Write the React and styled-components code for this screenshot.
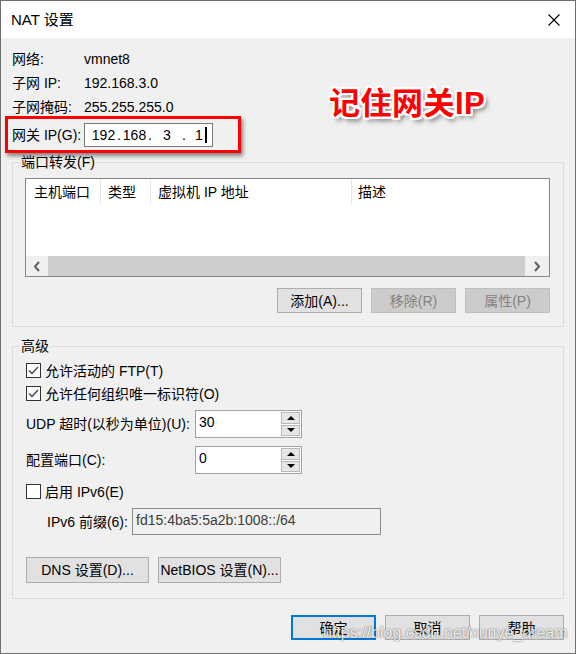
import React from "react";
import styled, { createGlobalStyle } from "styled-components";

const GlobalStyle = createGlobalStyle`
  html, body { margin: 0; padding: 0; background: #f0f0f0; }
  body {
    font-family: "Liberation Sans", "Noto Sans CJK SC", sans-serif;
    font-size: 14px;
    color: #000;
  }
  * { box-sizing: border-box; }
`;

const Window = styled.div`
  position: relative;
  width: 576px;
  height: 654px;
  border: 1px solid #6e6e6e;
  background: #f0f0f0;
  display: flex;
  flex-direction: column;
`;

const TitleBar = styled.div`
  height: 37px;
  flex: none;
  background: #fff;
  display: flex;
  align-items: center;
  padding: 0 15px 0 10px;
  font-size: 15px;
  line-height: 20px;
`;

const TitleText = styled.span`
  flex: 1;
`;

const Body = styled.div`
  display: flex;
  flex-direction: column;
  padding: 9px 11px 0 11px;
`;

const InfoGrid = styled.div`
  display: grid;
  grid-template-columns: 72px 1fr;
  grid-auto-rows: 24px;
  align-items: center;
  line-height: 18px;
`;

const GatewayBox = styled.div`
  display: flex;
  align-items: center;
  width: 236px;
  height: 37px;
  margin: -3px 0 0 -7px;
  padding-left: 4px;
  border: 3px solid #ff0000;
  box-shadow: 2px 3px 4px rgba(0, 0, 0, 0.45);
  position: relative;
`;

const FieldLabel = styled.span`
  width: ${(p) => p.$w || 72}px;
  flex: none;
  line-height: 18px;
  white-space: nowrap;
`;

const IpInput = styled.div`
  width: 129px;
  height: 24px;
  background: #fff;
  border: 1px solid #7a7a7a;
  display: flex;
  align-items: center;
  padding-left: 5px;
  line-height: 18px;
`;

const Octet = styled.span`
  width: ${(p) => p.$w || 26}px;
  display: flex;
  align-items: center;
  justify-content: ${(p) => (p.$left ? "flex-start" : "center")};
  padding-left: ${(p) => (p.$left ? "9px" : "0")};
`;

const Dot = styled.span`
  width: 4px;
  text-align: center;
`;

const Caret = styled.span`
  display: inline-block;
  width: 2px;
  height: 16px;
  background: #000;
  margin-left: 2px;
`;

const Annotation = styled.div`
  position: absolute;
  left: 328px;
  top: 85px;
  font-family: "Liberation Sans", "Noto Sans CJK SC", sans-serif;
  font-size: 31px;
  font-weight: bold;
  line-height: 36px;
  color: #ff0000;
  letter-spacing: 0.5px;
  text-shadow:
    -2px -2px 0 #fff, 2px -2px 0 #fff, -2px 2px 0 #fff, 2px 2px 0 #fff,
    0 -2px 0 #fff, 0 2px 0 #fff, -2px 0 0 #fff, 2px 0 0 #fff,
    3px 4px 5px rgba(0, 0, 0, 0.55);
`;

const Group = styled.fieldset`
  margin: ${(p) => p.$mt || 0}px 0 0 0;
  padding: 0;
  border: 1px solid #dcdcdc;
  min-width: 0;
`;

const Legend = styled.legend`
  margin-left: 7px;
  padding: 0 1px;
  line-height: 18px;
`;

const GroupInner = styled.div`
  display: flex;
  flex-direction: column;
  padding: ${(p) => p.$pad};
`;

const ListView = styled.div`
  height: 99px;
  border: 1px solid #828790;
  background: #fff;
  display: flex;
  flex-direction: column;
`;

const ListHeader = styled.div`
  height: 26px;
  display: flex;
  align-items: flex-start;
  padding-top: 1px;
`;

const HeaderCell = styled.div`
  width: ${(p) => (p.$w ? `${p.$w}px` : "auto")};
  flex: ${(p) => (p.$w ? "none" : "1")};
  height: 24px;
  line-height: 24px;
  padding-left: ${(p) => p.$pl || 7}px;
  border-right: ${(p) => (p.$w ? "1px solid #e5e5e5" : "none")};
  white-space: nowrap;
`;

const ListBody = styled.div`
  flex: 1;
`;

const HScroll = styled.div`
  height: 20px;
  display: grid;
  grid-template-columns: 22px 1fr 24px;
  background: #f0f0f0;
`;

const ScrollArrow = styled.div`
  display: flex;
  align-items: center;
  justify-content: center;
`;

const ScrollThumb = styled.div`
  background: #cdcdcd;
`;

const ButtonRow = styled.div`
  display: flex;
  justify-content: ${(p) => (p.$start ? "flex-start" : "flex-end")};
  gap: 9px;
  margin-top: ${(p) => p.$mt || 0}px;
`;

const Button = styled.button`
  width: ${(p) => p.$w || 85}px;
  height: ${(p) => p.$h || 25}px;
  margin: 0;
  padding: 0;
  font: inherit;
  font-size: 14px;
  line-height: 18px;
  color: ${(p) => (p.disabled ? "#838383" : "#000")};
  background: ${(p) => (p.disabled ? "#cccccc" : "#e1e1e1")};
  border: ${(p) =>
    p.$focused ? "2px solid #0078d7" : p.disabled ? "1px solid #bfbfbf" : "1px solid #adadad"};
  white-space: nowrap;
`;

const CheckRow = styled.label`
  display: flex;
  align-items: center;
  height: 23px;
  margin-top: ${(p) => p.$mt || 0}px;
  line-height: 18px;
`;

const Box = styled.span`
  width: 15px;
  height: 15px;
  flex: none;
  border: 1px solid #333;
  background: #fff;
  margin-right: 4px;
  display: flex;
  align-items: center;
  justify-content: center;
`;

const FormRow = styled.div`
  display: flex;
  align-items: center;
  margin-top: ${(p) => p.$mt || 0}px;
  padding-left: ${(p) => p.$indent || 0}px;
`;

const SpinBox = styled.div`
  width: 107px;
  height: 28px;
  border: 1px solid #a0a0a0;
  background: #fff;
  display: flex;
`;

const EditText = styled.div`
  flex: 1;
  padding: 2px 3px;
  line-height: 18px;
  color: ${(p) => (p.$disabled ? "#3c3c3c" : "#000")};
`;

const SpinButtons = styled.div`
  width: 19px;
  margin: 1px 1px 1px 0;
  display: flex;
  flex-direction: column;
  gap: 1px;
`;

const SpinButton = styled.div`
  flex: 1;
  background: #e6e6e6;
  border: 1px solid #b9b9b9;
  display: flex;
  align-items: center;
  justify-content: center;
`;

const Triangle = styled.span`
  width: 0;
  height: 0;
  border-left: 4px solid transparent;
  border-right: 4px solid transparent;
  ${(p) => (p.$down ? "border-top: 4px solid #000;" : "border-bottom: 4px solid #000;")}
`;

const PrefixField = styled.div`
  width: 249px;
  height: 27px;
  border: 1px solid #8c8c8c;
  background: #f0f0f0;
  display: flex;
`;

const Watermark = styled.div`
  position: absolute;
  left: 322px;
  top: 622px;
  font-family: "Liberation Sans", sans-serif;
  font-size: 16px;
  line-height: 20px;
  color: rgba(255, 255, 255, 0.9);
  text-shadow: 0 0 2px rgba(0, 0, 0, 0.45), 0 0 1px rgba(0, 0, 0, 0.35);
  pointer-events: none;
`;

const CloseIcon = () => (
  <svg width="12" height="12" viewBox="0 0 12 12">
    <path d="M0.5 0.5 L11.5 11.5 M11.5 0.5 L0.5 11.5" stroke="#000" strokeWidth="1.1" fill="none" />
  </svg>
);

const Chevron = ({ dir }) => (
  <svg width="8" height="11" viewBox="0 0 8 11">
    <path
      d={dir === "left" ? "M6 1 L2 5.5 L6 10" : "M2 1 L6 5.5 L2 10"}
      stroke="#606060"
      strokeWidth="2"
      fill="none"
    />
  </svg>
);

const CheckBox = ({ checked }) => (
  <Box>
    {checked && (
      <svg width="13" height="13" viewBox="0 0 13 13">
        <path d="M2 6.5 L5 9.5 L11 3" stroke="#444" strokeWidth="1.3" fill="none" />
      </svg>
    )}
  </Box>
);

const Spin = ({ value }) => (
  <SpinBox>
    <EditText>{value}</EditText>
    <SpinButtons>
      <SpinButton>
        <Triangle />
      </SpinButton>
      <SpinButton>
        <Triangle $down />
      </SpinButton>
    </SpinButtons>
  </SpinBox>
);

export default function App() {
  return (
    <>
      <GlobalStyle />
      <Window>
        <TitleBar>
          <TitleText>NAT 设置</TitleText>
          <CloseIcon />
        </TitleBar>
        <Body>
          <InfoGrid>
            <span>网络:</span>
            <span>vmnet8</span>
            <span>子网 IP:</span>
            <span>192.168.3.0</span>
            <span>子网掩码:</span>
            <span>255.255.255.0</span>
          </InfoGrid>
          <GatewayBox>
            <FieldLabel>网关 IP(G):</FieldLabel>
            <IpInput>
              <Octet $w={27}>192</Octet>
              <Dot>.</Dot>
              <Octet $w={27}>168</Octet>
              <Dot>.</Dot>
              <Octet $w={30}>3</Octet>
              <Dot>.</Dot>
              <Octet $left>
                1<Caret />
              </Octet>
            </IpInput>
          </GatewayBox>

          <Group>
            <Legend>端口转发(F)</Legend>
            <GroupInner $pad="7px 13px 13px 12px">
              <ListView>
                <ListHeader>
                  <HeaderCell $w={75} $pl={8}>主机端口</HeaderCell>
                  <HeaderCell $w={50}>类型</HeaderCell>
                  <HeaderCell $w={201}>虚拟机 IP 地址</HeaderCell>
                  <HeaderCell $pl={6}>描述</HeaderCell>
                </ListHeader>
                <ListBody />
                <HScroll>
                  <ScrollArrow>
                    <Chevron dir="left" />
                  </ScrollArrow>
                  <ScrollThumb />
                  <ScrollArrow>
                    <Chevron dir="right" />
                  </ScrollArrow>
                </HScroll>
              </ListView>
              <ButtonRow $mt={11}>
                <Button>添加(A)...</Button>
                <Button disabled>移除(R)</Button>
                <Button disabled>属性(P)</Button>
              </ButtonRow>
            </GroupInner>
          </Group>

          <Group $mt={10}>
            <Legend>高级</Legend>
            <GroupInner $pad="4px 0 15px 13px">
              <CheckRow>
                <CheckBox checked />
                允许活动的 FTP(T)
              </CheckRow>
              <CheckRow>
                <CheckBox checked />
                允许任何组织唯一标识符(O)
              </CheckRow>
              <FormRow $mt={5}>
                <FieldLabel $w={169}>UDP 超时(以秒为单位)(U):</FieldLabel>
                <Spin value="30" />
              </FormRow>
              <FormRow $mt={8}>
                <FieldLabel $w={169}>配置端口(C):</FieldLabel>
                <Spin value="0" />
              </FormRow>
              <CheckRow $mt={6}>
                <CheckBox />
                启用 IPv6(E)
              </CheckRow>
              <FormRow $mt={5} $indent={21}>
                <FieldLabel $w={85}>IPv6 前缀(6):</FieldLabel>
                <PrefixField>
                  <EditText $disabled>fd15:4ba5:5a2b:1008::/64</EditText>
                </PrefixField>
              </FormRow>
              <ButtonRow $start $mt={22}>
                <Button $w={123} $h={26}>DNS 设置(D)...</Button>
                <Button $w={123} $h={26}>NetBIOS 设置(N)...</Button>
              </ButtonRow>
            </GroupInner>
          </Group>

          <ButtonRow $mt={16}>
            <Button $focused>确定</Button>
            <Button>取消</Button>
            <Button>帮助</Button>
          </ButtonRow>
        </Body>
        <Annotation>记住网关IP</Annotation>
        <Watermark>https://blog.csdn.net/xunye_dream</Watermark>
      </Window>
    </>
  );
}
